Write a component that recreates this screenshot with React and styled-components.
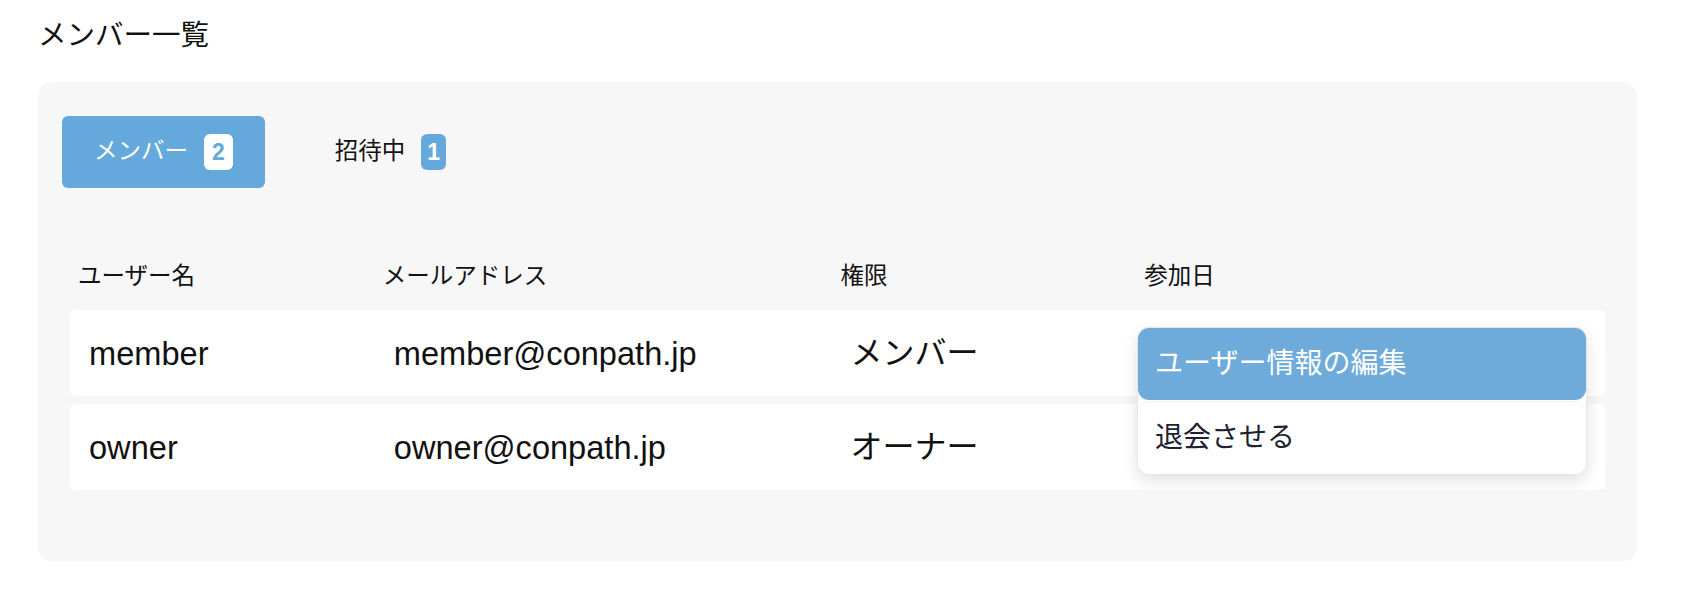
import React from 'react';
import styled, { createGlobalStyle } from 'styled-components';

const C = {
  blue: '#65a9dc',
  menuBlue: '#6eabda',
  panel: '#f7f7f7',
  text: '#111111',
  menuText: '#1d2130',
};

const GlobalStyle = createGlobalStyle`
  body {
    margin: 0;
    background: #ffffff;
    color: ${C.text};
    font-family: "Liberation Sans", "Noto Sans CJK JP", sans-serif;
  }
`;

const Page = styled.div`
  padding: 14px 45px 29px 38px;
`;
const Title = styled.h1`
  margin: 0 0 26px;
  font-size: 28.5px;
  font-weight: 400;
  line-height: 42px;
`;
const Panel = styled.section`
  background: ${C.panel};
  border-radius: 14px;
  padding: 34px 24px 71px 24px;
`;
const Tabs = styled.div`
  display: flex;
  gap: 38px;
`;
const Tab = styled.button`
  display: flex;
  align-items: center;
  height: 72px;
  padding: 0 32px;
  border: 0;
  border-radius: 6px;
  background: ${p => (p.$active ? C.blue : 'transparent')};
  color: ${p => (p.$active ? '#ffffff' : C.text)};
  font-family: inherit;
  font-size: 23.5px;
  line-height: 1;
  cursor: pointer;
`;
const Badge = styled.span`
  display: inline-flex;
  align-items: center;
  justify-content: center;
  height: 36px;
  margin-left: 16px;
  padding: 0 ${p => (p.$narrow ? 6 : 8)}px;
  border-radius: 6px;
  background: ${p => (p.$active ? '#ffffff' : C.blue)};
  color: ${p => (p.$active ? C.blue : '#ffffff')};
  font-size: 23px;
  font-weight: 700;
`;
const Table = styled.div`
  margin: 66px 8px 0;
`;
const columns = '305fr 458fr 304fr 469fr';
const HeadRow = styled.div`
  display: grid;
  grid-template-columns: ${columns};
  align-items: center;
  height: 46px;
`;
const HeadCell = styled.div`
  padding-left: 8px;
  font-size: 23.5px;
  line-height: 1;
`;
const Body = styled.div`
  position: relative;
  margin-top: 10px;
  display: flex;
  flex-direction: column;
  gap: 8px;
`;
const Row = styled.div`
  display: grid;
  grid-template-columns: ${columns};
  align-items: center;
  height: 86px;
  background: #ffffff;
  border-radius: 6px;
`;
const Cell = styled.div`
  padding-left: ${p => (p.$jp ? 18 : 19)}px;
  padding-top: ${p => (p.$jp ? 0 : 3)}px;
  font-size: ${p => (p.$jp ? 32 : 32.6)}px;
  line-height: 1;
`;
const Menu = styled.div`
  position: absolute;
  top: 17px;
  right: 18px;
  width: 448px;
  display: flex;
  flex-direction: column;
  gap: 2px;
  background: #ffffff;
  border: 1px solid #e6e6e6;
  border-radius: 12px;
  box-shadow: 0 6px 16px rgba(0, 0, 0, 0.12);
`;
const MenuItem = styled.div`
  display: flex;
  align-items: center;
  height: 72px;
  padding: 0 17px;
  border-radius: 11px;
  background: ${p => (p.$active ? C.menuBlue : '#ffffff')};
  color: ${p => (p.$active ? '#ffffff' : C.menuText)};
  box-shadow: ${p => (p.$active ? 'none' : '0 -1px 0 #f0f0f0')};
  font-size: 28px;
  line-height: 1;
`;

const members = [
  { name: 'member', email: 'member@conpath.jp', role: 'メンバー' },
  { name: 'owner', email: 'owner@conpath.jp', role: 'オーナー' },
];

export default function App() {
  return (
    <Page>
      <GlobalStyle />
      <Title>メンバー一覧</Title>
      <Panel>
        <Tabs>
          <Tab $active>
            メンバー<Badge $active>2</Badge>
          </Tab>
          <Tab>
            招待中<Badge $narrow>1</Badge>
          </Tab>
        </Tabs>
        <Table>
          <HeadRow>
            <HeadCell>ユーザー名</HeadCell>
            <HeadCell>メールアドレス</HeadCell>
            <HeadCell>権限</HeadCell>
            <HeadCell>参加日</HeadCell>
          </HeadRow>
          <Body>
            {members.map(m => (
              <Row key={m.email}>
                <Cell>{m.name}</Cell>
                <Cell>{m.email}</Cell>
                <Cell $jp>{m.role}</Cell>
                <Cell />
              </Row>
            ))}
            <Menu>
              <MenuItem $active>ユーザー情報の編集</MenuItem>
              <MenuItem>退会させる</MenuItem>
            </Menu>
          </Body>
        </Table>
      </Panel>
    </Page>
  );
}
